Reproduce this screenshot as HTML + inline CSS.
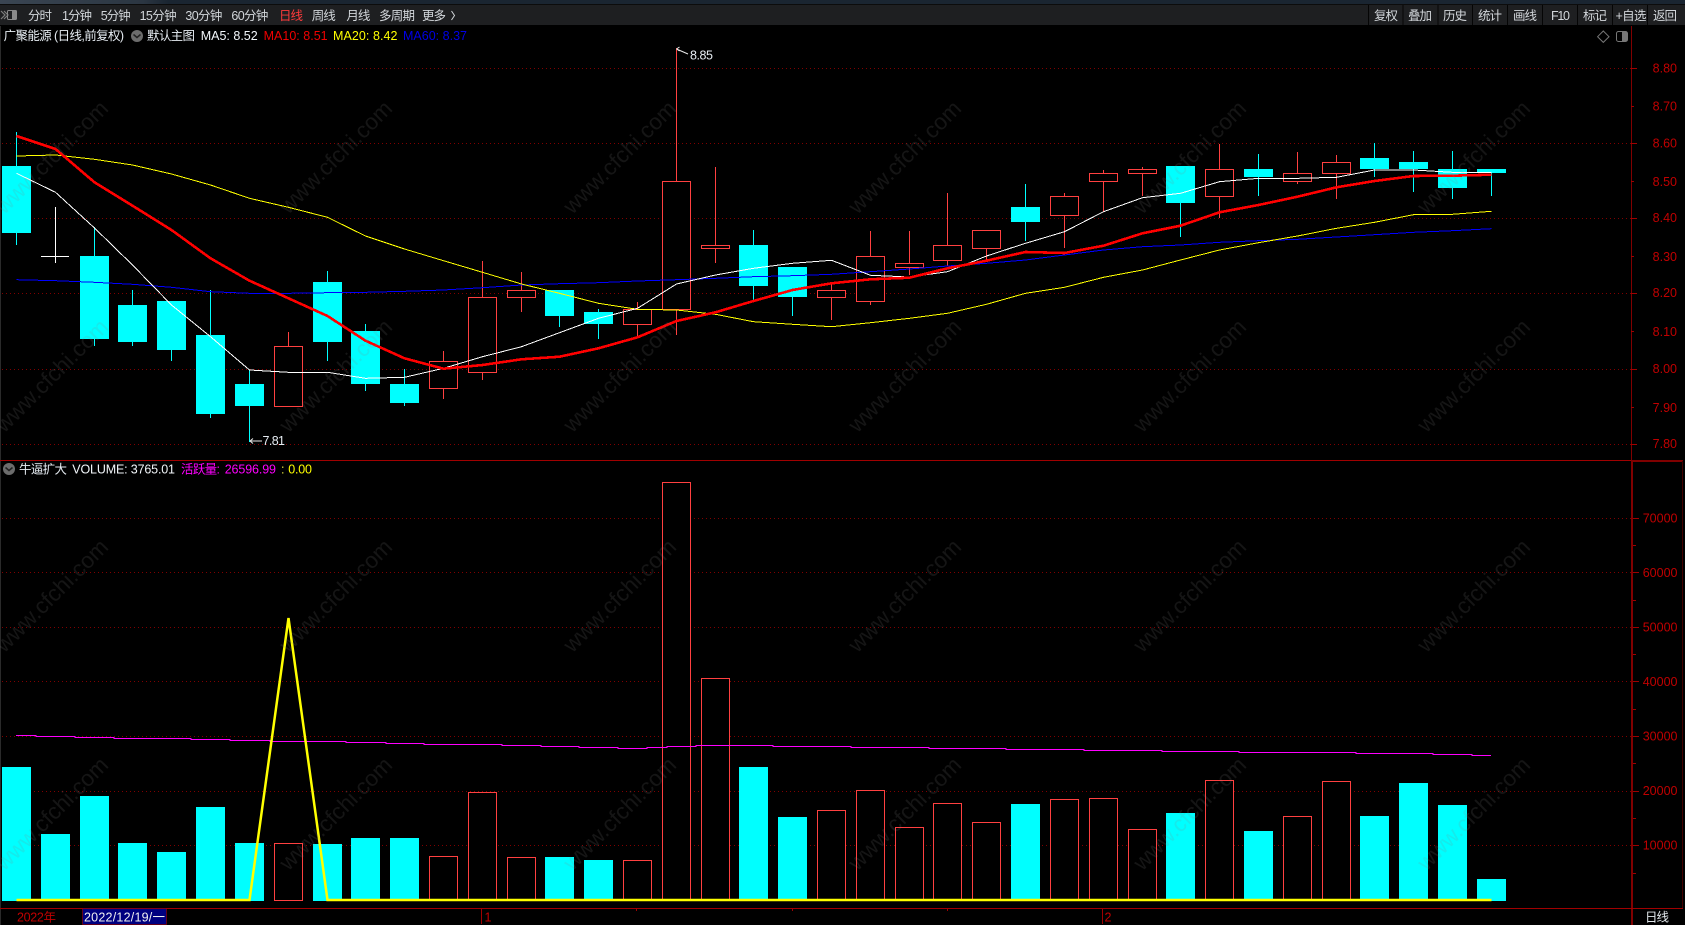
<!DOCTYPE html>
<html lang="zh">
<head>
<meta charset="utf-8">
<title>广聚能源</title>
<style>
html,body{margin:0;padding:0;background:#000;width:1685px;height:925px;overflow:hidden}
svg{display:block;position:absolute;left:0;top:0}
text{font-family:"Liberation Sans","Noto Sans CJK SC",sans-serif;font-size:12.5px;white-space:pre}
.tb text{fill:#d2d6da;font-size:12.5px}
.ax text{fill:#c00000;text-anchor:end;font-size:12.5px}
.wm text{font-size:22.5px}
</style>
</head>
<body>
<svg width="1685" height="925" viewBox="0 0 1685 925" xmlns="http://www.w3.org/2000/svg">
<defs>
<linearGradient id="top" x1="0" x2="1" y1="0" y2="0"><stop offset="0" stop-color="#3a4552"/><stop offset=".085" stop-color="#2b3642"/><stop offset=".1" stop-color="#1a2531"/><stop offset="1" stop-color="#1a2531"/></linearGradient>
</defs>
<rect width="1685" height="925" fill="#000"/>
<!-- top bars -->
<rect x="0" y="0" width="1685" height="4" fill="url(#top)"/>
<rect x="0" y="4" width="1685" height="1" fill="#0c0c0c"/>
<rect x="0" y="5" width="1685" height="20" fill="#1e1f21"/>
<rect x="0" y="25" width="1685" height="1" fill="#000"/>
<rect x="0" y="26" width="1" height="899" fill="#2a2a2a"/>
<!-- left icon -->
<path d="M1 11l4 4-4 4M4 11l4 4-4 4" fill="none" stroke="#7d7d7d" stroke-width="1.2"/>
<rect x="7.5" y="10.5" width="9" height="9" rx="1" fill="none" stroke="#8a8a8a"/>
<rect x="12" y="11" width="4" height="8" fill="#8a8a8a"/>
<!-- toolbar -->
<g class="tb">
<text x="28" y="20" textLength="24">分时</text>
<text x="62" y="20" textLength="30">1分钟</text>
<text x="100.7" y="20" textLength="30">5分钟</text>
<text x="139.6" y="20" textLength="37">15分钟</text>
<text x="185.4" y="20" textLength="37">30分钟</text>
<text x="231.4" y="20" textLength="37">60分钟</text>
<text x="279" y="20" textLength="24" style="fill:#ff3b3b">日线</text>
<text x="311.8" y="20" textLength="24">周线</text>
<text x="346.4" y="20" textLength="24">月线</text>
<text x="379" y="20" textLength="36">多周期</text>
<text x="422" y="20" textLength="24">更多</text>
<path d="M451.5 11l3 4.5-3 4.5" fill="none" stroke="#d2d6da"/>
<rect x="1368" y="5" width="1" height="20" fill="#050505"/>
<rect x="1402.5" y="5" width="1" height="20" fill="#050505"/>
<rect x="1437.5" y="5" width="1" height="20" fill="#050505"/>
<rect x="1472" y="5" width="1" height="20" fill="#050505"/>
<rect x="1507" y="5" width="1" height="20" fill="#050505"/>
<rect x="1542" y="5" width="1" height="20" fill="#050505"/>
<rect x="1577" y="5" width="1" height="20" fill="#050505"/>
<rect x="1612" y="5" width="1" height="20" fill="#050505"/>
<rect x="1647" y="5" width="1" height="20" fill="#050505"/>
<text x="1374" y="20" textLength="24">复权</text>
<text x="1408" y="20" textLength="24">叠加</text>
<text x="1443" y="20" textLength="24">历史</text>
<text x="1478" y="20" textLength="24">统计</text>
<text x="1513" y="20" textLength="24">画线</text>
<text x="1551" y="20" textLength="19">F10</text>
<text x="1583" y="20" textLength="24">标记</text>
<text x="1615.5" y="20" textLength="31">+自选</text>
<text x="1653" y="20" textLength="24">返回</text>
</g>
<!-- info line -->
<text x="3.6" y="40" fill="#e6ecf2" textLength="120.5">广聚能源 (日线,前复权)</text>
<circle cx="137" cy="36" r="6" fill="#6c6c6c"/>
<path d="M133.5 34.5l3.5 3 3.5-3" fill="none" stroke="#222" stroke-width="1.5"/>
<text x="147" y="40" fill="#e6ecf2" textLength="48">默认主图</text>
<text x="200.7" y="40" fill="#f2f6fa" textLength="57">MA5: 8.52</text>
<text x="263.6" y="40" fill="#f00000" textLength="64">MA10: 8.51</text>
<text x="333" y="40" fill="#ffff00" textLength="64.5">MA20: 8.42</text>
<text x="403" y="40" fill="#0000e6" textLength="64">MA60: 8.37</text>
<path d="M1603.3 31l5.7 5.7-5.7 5.7-5.7-5.7z" fill="none" stroke="#777"/>
<rect x="1616.5" y="31.5" width="11" height="10" rx="2" fill="none" stroke="#777"/>
<rect x="1622" y="32" width="5" height="9" fill="#777"/>
<!-- grids -->
<g stroke="#800000" stroke-dasharray="1 3" stroke-width="1" fill="none" shape-rendering="crispEdges">
<path d="M2 68.5H1631M2 143.5H1631M2 218.5H1631M2 293.5H1631M2 369.5H1631M2 444.5H1631"/>
<path d="M2 518.5H1631M2 572.5H1631M2 627.5H1631M2 681.5H1631M2 736.5H1631M2 791.5H1631M2 845.5H1631"/>
</g>
<!-- candle wicks -->
<path fill="none" stroke="#00ffff" stroke-width="1" shape-rendering="crispEdges" d="M16.5 132V245M94.5 227V346M132.5 290V346M171.5 350V361M210.5 290V418M249.5 370V442M327.5 271V361M365.5 324V391M404.5 369V406M559.5 290V327M598.5 309V339M753.5 230V300M792.5 297V316M1025.5 184V241M1180.5 203V237M1258.5 154V196M1374.5 143V177M1413.5 151V192M1452.5 151V199M1491.5 169V196"/>
<path fill="none" stroke="#ffffff" stroke-width="1" shape-rendering="crispEdges" d="M55.5 207V263M41 256.5H69"/>
<path fill="none" stroke="#ff4040" stroke-width="1" shape-rendering="crispEdges" d="M288.5 332V346M443.5 351V361M443.5 389V399M482.5 261V297M482.5 373V380M521.5 272V290M521.5 298V312M637.5 302V309M637.5 325V337M676.5 48V181M676.5 310V335M715.5 167V245M715.5 249V263M831.5 283V290M831.5 298V320M870.5 231V256M870.5 302V305M909.5 231V263M909.5 268V275M947.5 193V245M947.5 261V266M986.5 249V260M1064.5 193V196M1064.5 216V248M1103.5 170V173M1103.5 182V212M1142.5 167V169M1142.5 174V196M1219.5 144V169M1219.5 197V218M1297.5 152V173M1297.5 182V184M1336.5 155V162M1336.5 174V199"/>
<!-- candle bodies -->
<path fill="#00ffff" d="M2 166h29v67h-29zM80 256h29v83h-29zM118 305h29v37h-29zM157 301h29v49h-29zM196 335h29v79h-29zM235 384h29v22h-29zM313 282h29v60h-29zM351 331h29v53h-29zM390 384h29v19h-29zM545 290h29v26h-29zM584 312h29v12h-29zM739 245h29v41h-29zM778 267h29v30h-29zM1011 207h29v15h-29zM1166 166h29v37h-29zM1244 169h29v8h-29zM1360 158h29v11h-29zM1399 162h29v7h-29zM1438 169h29v19h-29zM1477 169h29v4h-29z"/>
<path fill="#000" stroke="#ff4040" stroke-width="1" shape-rendering="crispEdges" d="M274.5 346.5h28v60h-28zM429.5 361.5h28v27h-28zM468.5 297.5h28v75h-28zM507.5 290.5h28v7h-28zM623.5 309.5h28v15h-28zM662.5 181.5h28v128h-28zM701.5 245.5h28v3h-28zM817.5 290.5h28v7h-28zM856.5 256.5h28v45h-28zM895.5 263.5h28v4h-28zM933.5 245.5h28v15h-28zM972.5 230.5h28v18h-28zM1050.5 196.5h28v19h-28zM1089.5 173.5h28v8h-28zM1128.5 169.5h28v4h-28zM1205.5 169.5h28v27h-28zM1283.5 173.5h28v8h-28zM1322.5 162.5h28v11h-28z"/>
<!-- MA lines -->
<g fill="none" stroke-linejoin="round" shape-rendering="crispEdges">
<polyline stroke="#0000ff" stroke-width="1" points="16.5,279.7 55.5,280.7 94.5,282.3 132.5,284.3 171.5,287.3 210.5,291.7 249.5,293.3 288.5,293.3 327.5,292.7 365.5,292.3 404.5,291.3 443.5,290 482.5,287.7 521.5,285 559.5,283.7 598.5,282.7 637.5,281 676.5,279.7 715.5,278.3 753.5,276.7 792.5,275.7 831.5,274.3 870.5,271.7 909.5,269 947.5,266 986.5,263.3 1025.5,260 1064.5,255 1103.5,250 1142.5,246.7 1180.5,245 1219.5,242.3 1258.5,240.7 1297.5,239.3 1336.5,237 1374.5,234.7 1413.5,232.3 1452.5,230.7 1491.5,228.7"/>
<polyline stroke="#ffff00" stroke-width="1" points="16.5,156 55.5,155 94.5,159.3 132.5,165 171.5,174 210.5,185 249.5,198.3 288.5,207.3 327.5,217.3 365.5,236 404.5,249 443.5,260.7 482.5,272.3 521.5,284 559.5,293.3 598.5,303.3 637.5,309.3 676.5,310 715.5,314.3 753.5,321.7 792.5,324.3 831.5,326.7 870.5,322.7 909.5,318.3 947.5,313.3 986.5,304.3 1025.5,293.3 1064.5,287.3 1103.5,277.3 1142.5,270 1180.5,260 1219.5,250 1258.5,242.7 1297.5,236 1336.5,228.3 1374.5,222.3 1413.5,214.7 1452.5,214.3 1491.5,211.3"/>
<polyline stroke="#ffffff" stroke-width="1" points="16.5,173.3 55.5,192.3 94.5,228 132.5,265 171.5,305 210.5,336.7 249.5,370 288.5,372.3 327.5,372.3 365.5,378.3 404.5,377.3 443.5,368.3 482.5,356.7 521.5,346.7 559.5,332.7 598.5,318.3 637.5,308.3 676.5,284 715.5,275 753.5,268.3 792.5,263.3 831.5,260.3 870.5,275.3 909.5,277 947.5,271.7 986.5,256 1025.5,243.3 1064.5,231.7 1103.5,211.7 1142.5,197.7 1180.5,193.3 1219.5,181.7 1258.5,178.3 1297.5,178.3 1336.5,177.3 1374.5,170 1413.5,170 1452.5,172.3 1491.5,172.7"/>
<polyline stroke="#ff0000" stroke-width="2.6" points="16.5,136 55.5,149 94.5,182.3 132.5,205.7 171.5,230 210.5,258.3 249.5,280.7 288.5,298.3 327.5,316 365.5,340.7 404.5,358.3 443.5,368.7 482.5,365 521.5,359.3 559.5,356.7 598.5,348.3 637.5,337.3 676.5,321 715.5,312.3 753.5,301 792.5,290 831.5,283.3 870.5,279.3 909.5,277.7 947.5,268.3 986.5,260.7 1025.5,252 1064.5,253 1103.5,245.7 1142.5,233.3 1180.5,225.7 1219.5,212.3 1258.5,205 1297.5,196.7 1336.5,187.3 1374.5,181 1413.5,176 1452.5,175.7 1491.5,174.7"/>
</g>
<!-- markers -->
<path d="M676.5 49l11.5 5M676.5 49l3-2M676.5 49l3 2" fill="none" stroke="#e8e8e8"/>
<text x="690" y="59.5" fill="#e6ecf2" textLength="23">8.85</text>
<path d="M250 441h12M250 441l3-2.5M250 441l3 2.5" fill="none" stroke="#e8e8e8"/>
<text x="262.5" y="445" fill="#e6ecf2" textLength="22.5">7.81</text>
<!-- divider -->
<rect x="0" y="460" width="1632" height="1" fill="#a00000"/>
<rect x="1631" y="460" width="52" height="2" fill="#800000"/>
<!-- volume line -->
<circle cx="9" cy="469" r="6" fill="#6c6c6c"/>
<path d="M5.5 467.5l3.5 3 3.5-3" fill="none" stroke="#222" stroke-width="1.5"/>
<text x="19" y="473.5" fill="#e6ecf2" textLength="48">牛逼扩大</text>
<text x="72.3" y="473.5" fill="#f2f6fa" textLength="102.7">VOLUME: 3765.01</text>
<text x="181" y="473.5" fill="#ff00ff" textLength="39">活跃量:</text>
<text x="224.7" y="473.5" fill="#ff00ff" textLength="51.3">26596.99</text>
<text x="281" y="473.5" fill="#e8e840">:</text>
<text x="288.3" y="473.5" fill="#ffff00" textLength="23.7">0.00</text>
<!-- volume bars -->
<path fill="#00ffff" d="M2 767h29V901H2zM41 834h29V901H41zM80 796h29V901H80zM118 843h29V901H118zM157 852h29V901H157zM196 807h29V901H196zM235 843h29V901H235zM313 844h29V901H313zM351 838h29V901H351zM390 838h29V901H390zM545 857h29V901H545zM584 860h29V901H584zM739 767h29V901H739zM778 817h29V901H778zM1011 804h29V901H1011zM1166 813h29V901H1166zM1244 831h29V901H1244zM1360 816h29V901H1360zM1399 783h29V901H1399zM1438 805h29V901H1438zM1477 879h29V901H1477z"/>
<path fill="#000" stroke="#ff4040" stroke-width="1" shape-rendering="crispEdges" d="M274.5 843.5h28V900.5h-28zM429.5 856.5h28V900.5h-28zM468.5 792.5h28V900.5h-28zM507.5 857.5h28V900.5h-28zM623.5 860.5h28V900.5h-28zM662.5 482.5h28V900.5h-28zM701.5 678.5h28V900.5h-28zM817.5 810.5h28V900.5h-28zM856.5 790.5h28V900.5h-28zM895.5 827.5h28V900.5h-28zM933.5 803.5h28V900.5h-28zM972.5 822.5h28V900.5h-28zM1050.5 799.5h28V900.5h-28zM1089.5 798.5h28V900.5h-28zM1128.5 829.5h28V900.5h-28zM1205.5 780.5h28V900.5h-28zM1283.5 816.5h28V900.5h-28zM1322.5 781.5h28V900.5h-28z"/>
<!-- magenta -->
<path fill="none" stroke="#ff00ff" stroke-width="1.2" shape-rendering="crispEdges" d="M16 735.5H36V736.5H75V737.5H114V738.5H191V739.5H230V740.5H270V741.5H346V742.5H386V743.5H424V744.5H502V745.5H541V746.5H579V747.5H618V748.5H647V747.5H667V746.5H696V745.5H773V746.5H851V747.5H929V748.5H1006V749.5H1084V750.5H1162V751.5H1239V752.5H1356V753.5H1433V754.5H1472V755.5H1491"/>
<!-- yellow -->
<path fill="none" stroke="#ffff00" stroke-width="2.5" stroke-linejoin="miter" d="M16.5 900H249.5L288.5 618L327.5 900H1491.5"/>
<!-- axes -->
<path stroke="#800000" fill="none" stroke-width="1" shape-rendering="crispEdges" d="M1631.5 26V460"/>
<rect x="1631" y="461" width="2" height="464" fill="#800000"/>
<rect x="1682" y="461" width="1" height="447" fill="#400000"/>
<rect x="0" y="908" width="1683" height="1" fill="#a00000"/>
<path stroke="#a00000" fill="none" stroke-width="1" shape-rendering="crispEdges" d="M1631 68.5h6M1631 106.5h3M1631 143.5h6M1631 181.5h3M1631 218.5h6M1631 256.5h3M1631 293.5h6M1631 331.5h3M1631 369.5h6M1631 407.5h3M1631 444.5h6M1633 518.5h6M1633 545.5h3M1633 572.5h6M1633 600.5h3M1633 627.5h6M1633 654.5h3M1633 681.5h6M1633 709.5h3M1633 736.5h6M1633 763.5h3M1633 791.5h6M1633 818.5h3M1633 845.5h6M1633 873.5h3"/>
<g class="ax">
<text x="1677" y="72.5">8.80</text>
<text x="1677" y="110.5">8.70</text>
<text x="1677" y="147.5">8.60</text>
<text x="1677" y="186">8.50</text>
<text x="1677" y="222">8.40</text>
<text x="1677" y="261">8.30</text>
<text x="1677" y="297">8.20</text>
<text x="1677" y="336">8.10</text>
<text x="1677" y="373">8.00</text>
<text x="1677" y="412">7.90</text>
<text x="1677" y="448">7.80</text>
<text x="1677.5" y="522.5">70000</text>
<text x="1677.5" y="577">60000</text>
<text x="1677.5" y="631.5">50000</text>
<text x="1677.5" y="686">40000</text>
<text x="1677.5" y="740.5">30000</text>
<text x="1677.5" y="795">20000</text>
<text x="1677.5" y="849.5">10000</text>
</g>
<!-- bottom axis -->
<path stroke="#a00000" fill="none" stroke-width="1" shape-rendering="crispEdges" d="M481.5 909V924M636.5 909V911M792.5 909V911M947.5 909V911M1102.5 909V924"/>
<text x="17" y="921.5" fill="#c00000" textLength="39">2022年</text>
<rect x="82.5" y="908.5" width="84" height="16" fill="#000080" stroke="#a00000" stroke-width=".6"/>
<text x="84" y="921.5" fill="#f0f0f0" textLength="81">2022/12/19/一</text>
<text x="484.5" y="921.5" fill="#c00000">1</text>
<text x="1104.5" y="921.5" fill="#c00000">2</text>
<text x="1645" y="921.5" fill="#e0e6ea" textLength="24">日线</text>
<!-- watermark -->
<g class="wm" fill="#808080" fill-opacity=".16" text-anchor="middle">
<text transform="translate(57 162.5) rotate(-45)">www.cfchi.com</text>
<text transform="translate(341 162.5) rotate(-45)">www.cfchi.com</text>
<text transform="translate(625 162.5) rotate(-45)">www.cfchi.com</text>
<text transform="translate(910 162.5) rotate(-45)">www.cfchi.com</text>
<text transform="translate(1195 162.5) rotate(-45)">www.cfchi.com</text>
<text transform="translate(1479 162.5) rotate(-45)">www.cfchi.com</text>
<text transform="translate(57 381) rotate(-45)">www.cfchi.com</text>
<text transform="translate(341 381) rotate(-45)">www.cfchi.com</text>
<text transform="translate(625 381) rotate(-45)">www.cfchi.com</text>
<text transform="translate(910 381) rotate(-45)">www.cfchi.com</text>
<text transform="translate(1195 381) rotate(-45)">www.cfchi.com</text>
<text transform="translate(1479 381) rotate(-45)">www.cfchi.com</text>
<text transform="translate(57 601) rotate(-45)">www.cfchi.com</text>
<text transform="translate(341 601) rotate(-45)">www.cfchi.com</text>
<text transform="translate(625 601) rotate(-45)">www.cfchi.com</text>
<text transform="translate(910 601) rotate(-45)">www.cfchi.com</text>
<text transform="translate(1195 601) rotate(-45)">www.cfchi.com</text>
<text transform="translate(1479 601) rotate(-45)">www.cfchi.com</text>
<text transform="translate(57 819) rotate(-45)">www.cfchi.com</text>
<text transform="translate(341 819) rotate(-45)">www.cfchi.com</text>
<text transform="translate(625 819) rotate(-45)">www.cfchi.com</text>
<text transform="translate(910 819) rotate(-45)">www.cfchi.com</text>
<text transform="translate(1195 819) rotate(-45)">www.cfchi.com</text>
<text transform="translate(1479 819) rotate(-45)">www.cfchi.com</text>
</g>
</svg>
</body>
</html>
